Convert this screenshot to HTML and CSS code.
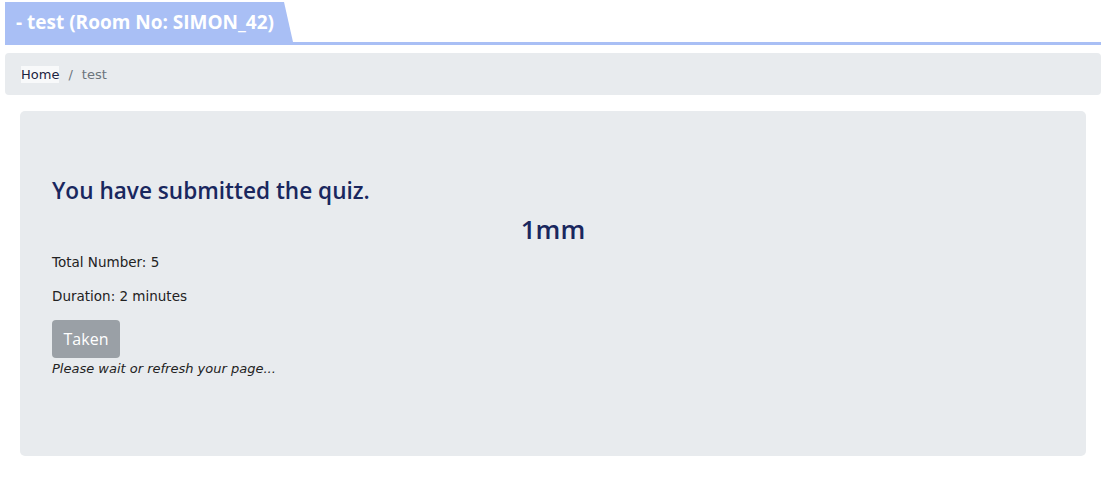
FILE: index.html
```html
<!DOCTYPE html>
<html>
<head>
<meta charset="utf-8">
<link rel="stylesheet" href="styles.css">
</head>
<body>
<div class="header">
  <div class="tab">- test (Room No: SIMON_42)</div>
</div>
<nav class="breadcrumb">
  <span class="crumb-home">Home</span>
  <span class="crumb-sep">/</span>
  <span class="crumb-active">test</span>
</nav>
<div class="card">
  <h3 class="title">You have submitted the quiz.</h3>
  <h2 class="score">1mm</h2>
  <p class="info">Total Number: 5</p>
  <p class="info info-last">Duration: 2 minutes</p>
  <button class="btn-taken" disabled>Taken</button>
  <p class="wait">Please wait or refresh your page...</p>
</div>
</body>
</html>
```
FILE: styles.css
```css
html, body {
  margin: 0;
  padding: 0;
  background: #ffffff;
}
body {
  font-family: "DejaVu Sans", Verdana, sans-serif;
  font-size: 13px;
  color: #212529;
}
.header {
  margin: 2px 7px 0 5px;
  border-bottom: 3px solid #a9bff5;
  display: flex;
}
.tab {
  width: 288px;
  height: 40px;
  box-sizing: border-box;
  background: #a9bff5;
  color: #ffffff;
  font-family: "Open Sans", sans-serif;
  font-weight: 700;
  font-size: 19px;
  line-height: 40px;
  padding-left: 11px;
  clip-path: polygon(0 0, calc(100% - 9px) 0, 100% 100%, 0 100%);
  white-space: nowrap;
}
.breadcrumb {
  margin: 8px 7px 0 5px;
  height: 42px;
  box-sizing: border-box;
  padding: 0 16px;
  background: #e8ebee;
  border-radius: 4px;
  display: flex;
  align-items: center;
  font-size: 13px;
}
.crumb-home {
  background: #f8f9fa;
  color: #1c2340;
  line-height: 17px;
}
.crumb-sep {
  color: #6c757d;
  padding: 0 9px;
}
.crumb-active {
  color: #6c757d;
}
.card {
  margin: 16px 22px 0 20px;
  height: 345px;
  box-sizing: border-box;
  background: #e8ebee;
  border-radius: 5px;
  padding: 65px 32px 0 32px;
}
.title {
  margin: 0;
  font-family: "Open Sans", sans-serif;
  font-weight: 600;
  font-size: 22.6px;
  line-height: 30px;
  color: #19275e;
}
.score {
  margin: 7px 0 0 0;
  text-align: center;
  font-family: "Open Sans", sans-serif;
  font-weight: 600;
  font-size: 26px;
  line-height: 32px;
  color: #19275e;
}
.info {
  margin: 9px 0 17px 0;
  font-size: 13.5px;
  line-height: 17px;
  color: #222;
}
.info + .info {
  margin-top: 0;
}
.info-last {
  margin-bottom: 15px;
}
.btn-taken {
  display: block;
  width: 68px;
  height: 38px;
  border: none;
  border-radius: 4px;
  background: #9aa0a6;
  color: #ffffff;
  font-family: "Open Sans", sans-serif;
  font-size: 16px;
  padding: 0;
  margin: 0;
}
.wait {
  margin: 2px 0 0 0;
  font-style: italic;
  font-size: 13px;
  line-height: 17px;
  color: #222;
}
```
